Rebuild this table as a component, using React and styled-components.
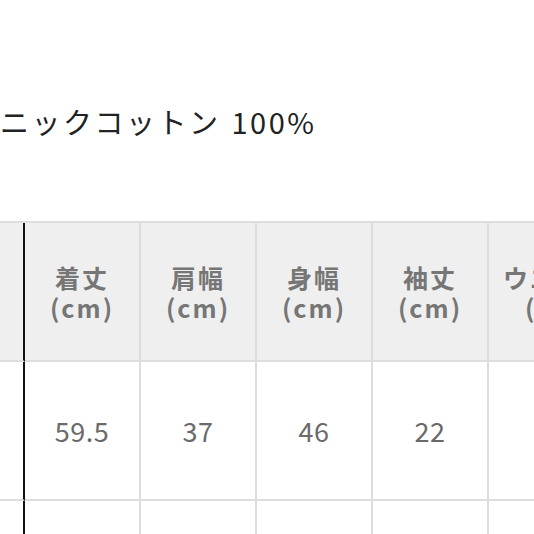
import React from "react";
import styled, { createGlobalStyle } from "styled-components";

const GlobalStyle = createGlobalStyle`
  html, body {
    margin: 0;
    padding: 0;
    background: #ffffff;
  }
  body {
    font-family: "Noto Sans CJK JP", "Noto Sans", sans-serif;
    overflow: hidden;
  }
`;

const Page = styled.div`
  width: 534px;
  height: 534px;
  overflow: hidden;
  padding-top: 101px;
  box-sizing: border-box;
`;

const Title = styled.p`
  margin: 0;
  font-size: 29px;
  line-height: 40px;
  letter-spacing: 2.5px;
  word-spacing: 2px;
  color: #222222;
  white-space: nowrap;
`;

const Table = styled.div`
  margin-top: 80px;
  display: grid;
  grid-template-columns: 25px repeat(4, 116px) 138px;
  grid-auto-rows: 139px;
  width: max-content;
  border-top: 2px solid #dddddd;
`;

const Cell = styled.div`
  box-sizing: border-box;
  display: flex;
  flex-direction: column;
  align-items: center;
  justify-content: center;
  border-right: 2px solid ${(p) => (p.$edge ? "#111111" : "#dddddd")};
  border-bottom: 2px solid #dddddd;
  background: ${(p) => (p.$head ? "#efefef" : "#ffffff")};
  color: ${(p) => (p.$head ? "#767676" : "#6a6a6a")};
  font-size: ${(p) => (p.$head ? "25px" : "27px")};
  font-weight: ${(p) => (p.$head ? 700 : 400)};
  letter-spacing: ${(p) => (p.$head ? "2px" : "0.5px")};
  line-height: ${(p) => (p.$head ? "30px" : "1")};
  white-space: nowrap;
`;

const heads = ["着丈", "肩幅", "身幅", "袖丈", "ウエスト"];
const values = ["59.5", "37", "46", "22", ""];

export default function App() {
  return (
    <>
      <GlobalStyle />
      <Page>
        <Title>ニックコットン 100%</Title>
        <Table>
          <Cell $head $edge />
          {heads.map((h) => (
            <Cell $head key={h}>
              <span>{h}</span>
              <span>(cm)</span>
            </Cell>
          ))}
          <Cell $edge />
          {values.map((v, i) => (
            <Cell key={i}>{v}</Cell>
          ))}
          <Cell $edge />
          {values.map((_, i) => (
            <Cell key={"e" + i} />
          ))}
        </Table>
      </Page>
    </>
  );
}
